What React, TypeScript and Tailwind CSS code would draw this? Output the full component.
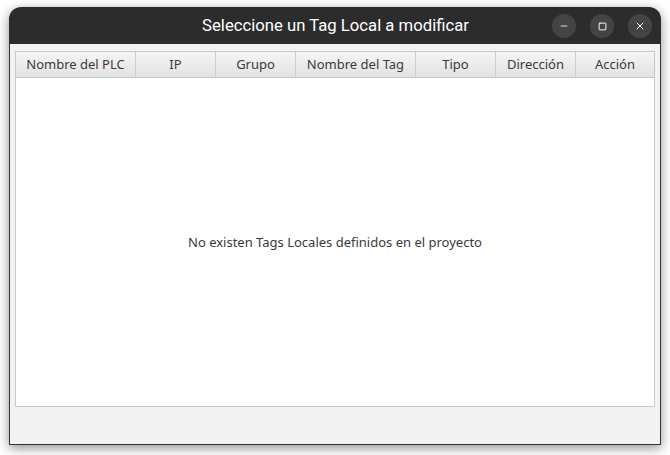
import { Minus, Square, X } from 'lucide-react'

const columns = [
  { label: 'Nombre del PLC', width: 'w-[120px]' },
  { label: 'IP', width: 'w-[80px]' },
  { label: 'Grupo', width: 'w-[80px]' },
  { label: 'Nombre del Tag', width: 'w-[120px]' },
  { label: 'Tipo', width: 'w-[80px]' },
  { label: 'Dirección', width: 'w-[80px]' },
  { label: 'Acción', width: 'flex-1' },
]

export default function App() {
  return (
    <div className="w-[670px] h-[455px] bg-white pt-[7px] pl-[9px] overflow-hidden">
      <div className="w-[652px] h-[438px] flex flex-col rounded-t-[12px] shadow-[0_3px_12px_rgba(0,0,0,0.45)]">
        {/* Title bar */}
        <div className="relative h-[37px] shrink-0 rounded-t-[12px] bg-[#2c2c2c] flex items-center justify-center">
          <span
            className="text-white text-[16.7px] font-normal pl-[1px]"
            style={{ fontFamily: 'Roboto, "Liberation Sans", sans-serif' }}
          >
            Seleccione un Tag Local a modificar
          </span>
          <div className="absolute right-[9px] top-[7px] flex gap-[14px]">
            <button className="w-[24px] h-[24px] rounded-full bg-[#444444] flex items-end justify-center pb-[7px]">
              <Minus className="text-white" size={10} strokeWidth={2} />
            </button>
            <button className="w-[24px] h-[24px] rounded-full bg-[#444444] flex items-center justify-center">
              <Square className="text-white" size={9} strokeWidth={2.5} />
            </button>
            <button className="w-[24px] h-[24px] rounded-full bg-[#444444] flex items-center justify-center">
              <X className="text-white" size={12} strokeWidth={2} />
            </button>
          </div>
        </div>

        {/* Content */}
        <div
          className="flex-1 bg-[#f2f2f2] border-x border-b border-[#333333] px-[5px] pt-[7px]"
          style={{ fontFamily: '"Noto Sans", "Open Sans", sans-serif' }}
        >
          <div className="w-[640px] h-[356px] border border-[#c8c8c8] bg-white flex flex-col">
            <div className="flex h-[26px] border-b border-[#c8c8c8] bg-gradient-to-b from-[#f5f5f5] to-[#e2e2e2]">
              {columns.map((col, i) => (
                <div
                  key={col.label}
                  className={`${col.width} flex items-center justify-center pt-[1px] text-[13px] text-[#3a3a3a] ${
                    i < columns.length - 1 ? 'border-r border-[#cfcfcf]' : ''
                  }`}
                >
                  {col.label}
                </div>
              ))}
            </div>
            <div className="flex-1 flex items-center justify-center pt-[1px]">
              <span className="text-[13px] text-[#3a3a3a]">
                No existen Tags Locales definidos en el proyecto
              </span>
            </div>
          </div>
        </div>
      </div>
    </div>
  )
}
